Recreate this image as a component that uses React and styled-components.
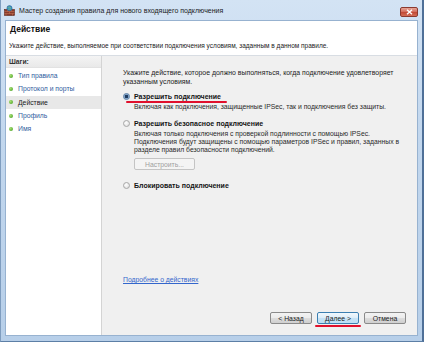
import React from "react";
import styled, { createGlobalStyle } from "styled-components";

const Global = createGlobalStyle`
  html, body { margin: 0; padding: 0; background: #bcd3ec; }
  body { font-family: "Liberation Sans", Arial, sans-serif; }
  * { box-sizing: border-box; }
`;

const Window = styled.div`
  width: 424px;
  height: 342px;
  display: flex;
  flex-direction: column;
  background: linear-gradient(180deg, #d3e3f4 0%, #c2d7ee 40%, #b7cfe9 100%);
  border-left: 1px solid #7f9dbf;
  border-bottom: 1px solid #5d7fa6;
  border-right: 2px solid #4f7098;
  overflow: hidden;
`;

const TitleBar = styled.div`
  height: 20px;
  flex: none;
  display: flex;
  align-items: center;
  padding-left: 3px;
  gap: 4px;
`;

const TitleText = styled.span`
  font-size: 7px;
  color: #1b1b1b;
  flex: 1;
  white-space: nowrap;
`;

const CloseButton = styled.div`
  width: 18px;
  height: 10px;
  margin-right: 4px;
  margin-top: 3px;
  border: 1px solid #8a3a30;
  border-radius: 2px;
  background: linear-gradient(180deg, #e6a597 0%, #d47060 45%, #c24a36 55%, #d46e56 100%);
  display: flex;
  align-items: center;
  justify-content: center;
`;

const Client = styled.div`
  flex: 1;
  display: flex;
  flex-direction: column;
  margin: 0 4px 5px 4px;
  border: 1px solid #97b2d0;
  background: #ffffff;
  min-height: 0;
`;

const Header = styled.div`
  height: 35px;
  flex: none;
  background: #ffffff;
  padding: 3px 0 0 3px;
  border-bottom: 1px solid #d8dde3;
  display: flex;
  flex-direction: column;
`;

const Heading = styled.div`
  font-size: 8.5px;
  font-weight: bold;
  color: #111;
  line-height: 10px;
  padding-left: 1px;
`;

const SubText = styled.div`
  font-size: 6.5px;
  color: #222;
  margin-top: 8px;
  line-height: 8px;
  white-space: nowrap;
`;

const Main = styled.div`
  flex: 1;
  display: flex;
  min-height: 0;
`;

const LeftPane = styled.div`
  width: 96px;
  flex: none;
  background: #ffffff;
  border-right: 1px solid #d4d4d4;
  display: flex;
  flex-direction: column;
`;

const StepsHeader = styled.div`
  height: 12px;
  background: linear-gradient(180deg, #f4f4f4, #e9e9e9);
  border-bottom: 1px solid #e2e2e2;
  font-size: 6.8px;
  font-weight: bold;
  color: #333;
  display: flex;
  align-items: center;
  padding-left: 3px;
  margin-bottom: 1px;
`;

const StepItem = styled.div`
  height: 13.3px;
  display: flex;
  align-items: center;
  gap: 5px;
  padding-left: 3px;
  font-size: 6.8px;
  color: ${(p) => (p.$active ? "#1a1a1a" : "#2f5c9e")};
  background: ${(p) => (p.$active ? "#e8e8e8" : "transparent")};
  white-space: nowrap;
`;

const Dot = styled.span`
  width: 4px;
  height: 4px;
  border-radius: 50%;
  background: radial-gradient(circle at 35% 35%, #a6e070, #3f9a1d);
  flex: none;
`;

const RightPane = styled.div`
  flex: 1;
  background: #f0f0f0;
  display: flex;
  flex-direction: column;
  padding: 13px 11px 11px 21px;
  min-width: 0;
`;

const Para = styled.div`
  font-size: 6.9px;
  line-height: 8.5px;
  color: #222;
`;

const Option = styled.div`
  display: flex;
  flex-direction: column;
  margin-top: ${(p) => p.$mt}px;
`;

const OptionRow = styled.label`
  display: flex;
  align-items: center;
  gap: 4px;
  height: 9px;
`;

const Radio = styled.span`
  width: 7px;
  height: 7px;
  border-radius: 50%;
  border: 1px solid ${(p) => (p.$checked ? "#5a7da3" : "#a7a7a7")};
  background: ${(p) =>
    p.$checked
      ? "radial-gradient(circle, #1f3b5e 0 1.4px, #6f97c3 1.8px, #e3edf7 100%)"
      : "radial-gradient(circle at 40% 35%, #ffffff, #d8d8d8)"};
  flex: none;
`;

const OptionLabel = styled.span`
  position: relative;
  font-size: 7px;
  font-weight: bold;
  color: #141414;
  white-space: nowrap;
  &::after {
    content: "";
    display: ${(p) => (p.$marked ? "block" : "none")};
    position: absolute;
    left: -8px;
    right: -6px;
    bottom: -3px;
    height: 2px;
    background: #e0102c;
    border-radius: 1px;
  }
`;

const OptionDesc = styled.div`
  font-size: 6.8px;
  line-height: 8px;
  color: #2a2a2a;
  padding-left: 11px;
  margin-top: 2px;
`;

const SmallButton = styled.button`
  margin: 4px 0 0 11px;
  width: 61px;
  height: 12px;
  border: 1px solid #c4c4c4;
  border-radius: 2px;
  background: #f4f4f4;
  color: #a0a0a0;
  font-family: inherit;
  font-size: 6.8px;
  padding: 0;
`;

const Link = styled.a`
  margin-top: auto;
  margin-bottom: 29px;
  font-size: 6.8px;
  color: #3366cc;
  text-decoration: underline;
  align-self: flex-start;
`;

const ButtonRow = styled.div`
  display: flex;
  justify-content: flex-end;
  gap: 5px;
`;

const DlgButton = styled.button`
  position: relative;
  width: 42px;
  height: 12px;
  padding: 0;
  font-family: inherit;
  font-size: 6.8px;
  color: #1a1a1a;
  border-radius: 2px;
  border: 1px solid ${(p) => (p.$default ? "#3c7fb1" : "#8a8a8a")};
  background: ${(p) =>
    p.$default
      ? "linear-gradient(180deg, #f1f8fd 0%, #dcedf9 50%, #c6e2f5 51%, #bde0f6 100%)"
      : "linear-gradient(180deg, #f3f3f3 0%, #ebebeb 50%, #dddddd 51%, #cfcfcf 100%)"};
  &::after {
    content: "";
    display: ${(p) => (p.$marked ? "block" : "none")};
    position: absolute;
    left: -3px;
    right: -3px;
    bottom: -4px;
    height: 2px;
    background: #e0102c;
    border-radius: 1px;
  }
`;

const WizardIcon = () => (
  <svg width="11" height="11" viewBox="0 0 11 11">
    <rect x="0.5" y="4.5" width="10" height="6" fill="#8a3b2a" stroke="#5a2518" strokeWidth="0.6" />
    <path d="M0.5 6.5H10.5M0.5 8.5H10.5M3.5 4.5V6.5M7.5 4.5V6.5M5.5 6.5V8.5M2 8.5V10.5M8.5 8.5V10.5" stroke="#c87a5c" strokeWidth="0.5" />
    <circle cx="5.5" cy="3.2" r="2.6" fill="#3f8fc6" stroke="#1f5d8a" strokeWidth="0.5" />
    <path d="M3.6 2.6c1-.7 2.6-.5 3.6.4M4.4 4.5c.6-.6 1.6-.8 2.4-.3" stroke="#7fd06a" strokeWidth="0.7" fill="none" />
  </svg>
);

const steps = [
  { label: "Тип правила" },
  { label: "Протокол и порты" },
  { label: "Действие", active: true },
  { label: "Профиль" },
  { label: "Имя" },
];

export default function App() {
  return (
    <>
      <Global />
      <Window>
        <TitleBar>
          <WizardIcon />
          <TitleText>Мастер создания правила для нового входящего подключения</TitleText>
          <CloseButton>
            <svg width="7" height="6" viewBox="0 0 7 6">
              <path d="M1 0.8L6 5.2M6 0.8L1 5.2" stroke="#fff" strokeWidth="1.4" />
            </svg>
          </CloseButton>
        </TitleBar>
        <Client>
          <Header>
            <Heading>Действие</Heading>
            <SubText>
              Укажите действие, выполняемое при соответствии подключения условиям, заданным в данном правиле.
            </SubText>
          </Header>
          <Main>
            <LeftPane>
              <StepsHeader>Шаги:</StepsHeader>
              {steps.map((s) => (
                <StepItem key={s.label} $active={s.active}>
                  <Dot />
                  {s.label}
                </StepItem>
              ))}
            </LeftPane>
            <RightPane>
              <Para>
                Укажите действие, которое должно выполняться, когда подключение удовлетворяет
                <br />
                указанным условиям.
              </Para>
              <Option $mt={6}>
                <OptionRow>
                  <Radio $checked />
                  <OptionLabel $marked>Разрешить подключение</OptionLabel>
                </OptionRow>
                <OptionDesc>
                  Включая как подключения, защищенные IPSec, так и подключения без защиты.
                </OptionDesc>
              </Option>
              <Option $mt={8}>
                <OptionRow>
                  <Radio />
                  <OptionLabel>Разрешить безопасное подключение</OptionLabel>
                </OptionRow>
                <OptionDesc>
                  Включая только подключения с проверкой подлинности с помощью IPSec.
                  <br />
                  Подключения будут защищены с помощью параметров IPSec и правил, заданных в
                  <br />
                  разделе правил безопасности подключений.
                </OptionDesc>
                <SmallButton disabled>Настроить...</SmallButton>
              </Option>
              <Option $mt={11}>
                <OptionRow>
                  <Radio />
                  <OptionLabel>Блокировать подключение</OptionLabel>
                </OptionRow>
              </Option>
              <Link href="#">Подробнее о действиях</Link>
              <ButtonRow>
                <DlgButton>&lt; Назад</DlgButton>
                <DlgButton $default $marked>Далее &gt;</DlgButton>
                <DlgButton>Отмена</DlgButton>
              </ButtonRow>
            </RightPane>
          </Main>
        </Client>
      </Window>
    </>
  );
}
